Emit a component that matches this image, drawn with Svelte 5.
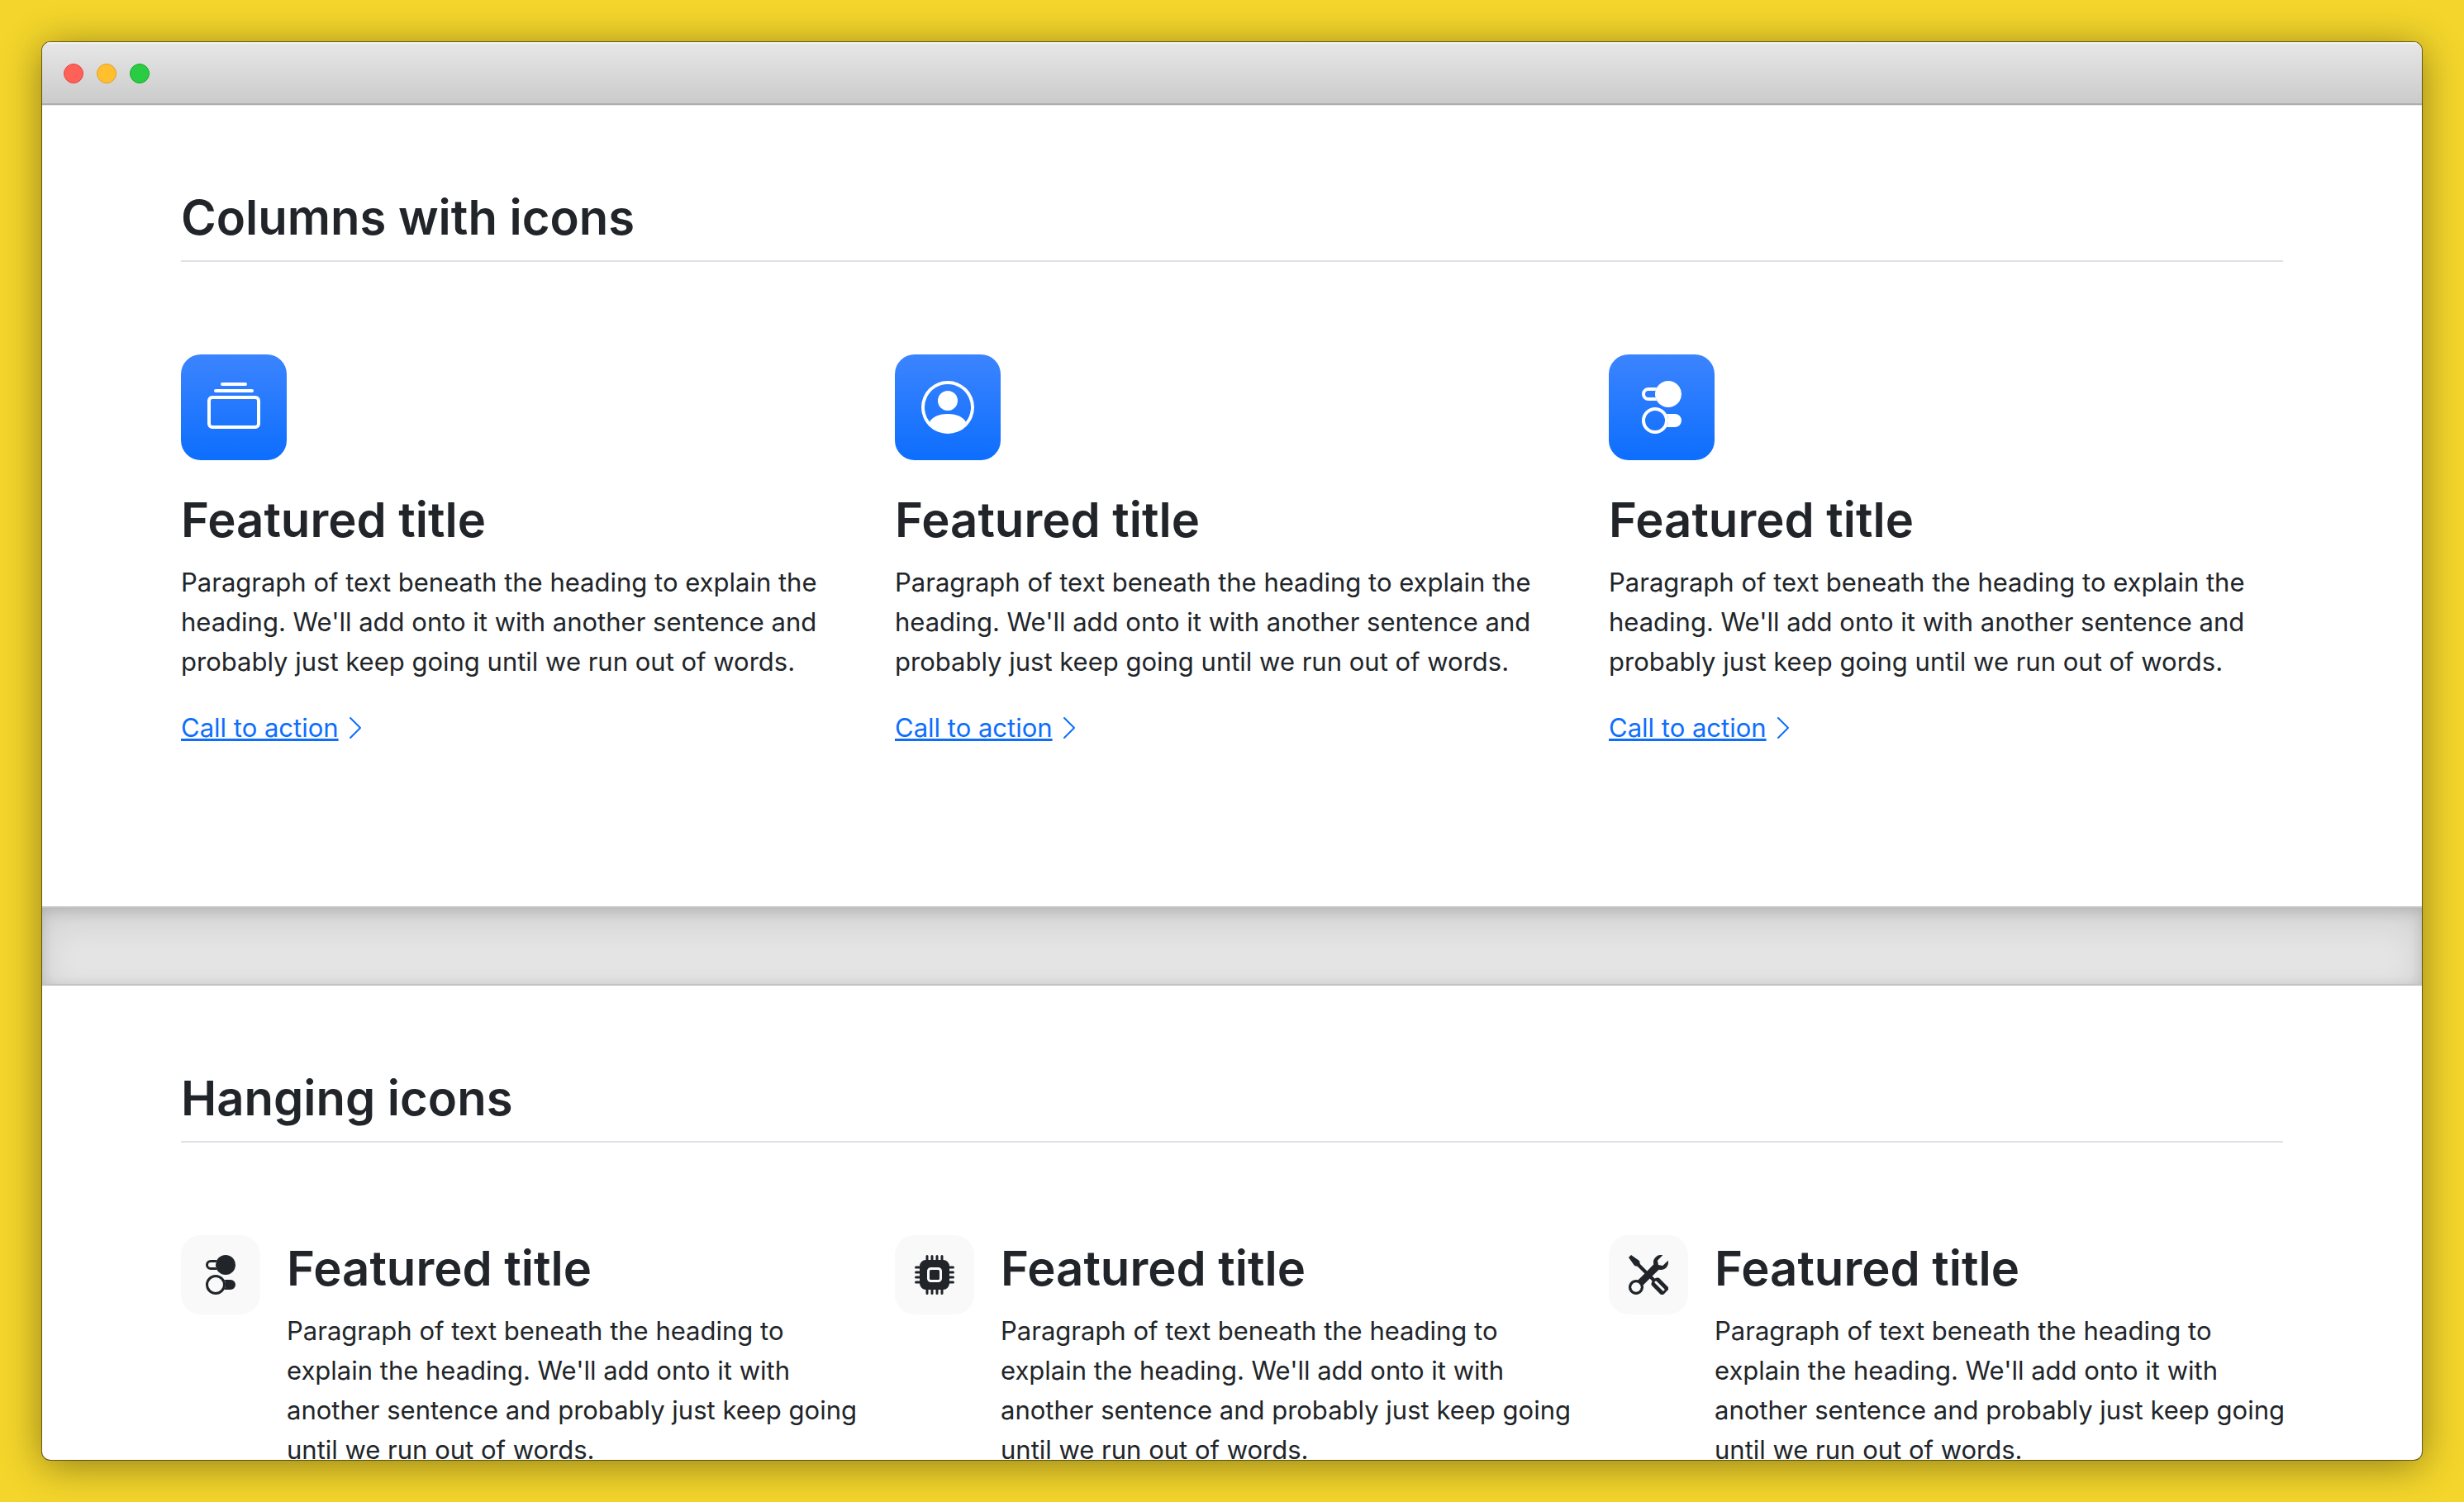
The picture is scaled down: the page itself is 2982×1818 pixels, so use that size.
<script>
  const paths = {
    collection: [
      'M2.5 3.5a.5.5 0 0 1 0-1h11a.5.5 0 0 1 0 1h-11zm2-2a.5.5 0 0 1 0-1h7a.5.5 0 0 1 0 1h-7zM0 13a1.5 1.5 0 0 0 1.5 1.5h13A1.5 1.5 0 0 0 16 13V6a1.5 1.5 0 0 0-1.5-1.5h-13A1.5 1.5 0 0 0 0 6v7zm1.5.5A.5.5 0 0 1 1 13V6a.5.5 0 0 1 .5-.5h13a.5.5 0 0 1 .5.5v7a.5.5 0 0 1-.5.5h-13z',
    ],
    person: [
      'M11 6a3 3 0 1 1-6 0 3 3 0 0 1 6 0z',
      'M0 8a8 8 0 1 1 16 0A8 8 0 0 1 0 8zm8-7a7 7 0 0 0-5.468 11.37C3.242 11.226 4.805 10 8 10s4.757 1.225 5.468 2.37A7 7 0 0 0 8 1z',
    ],
    toggles: [
      'M9.465 10H12a2 2 0 1 1 0 4H9.465c.34-.588.535-1.271.535-2 0-.729-.195-1.412-.535-2z',
      'M6 15a3 3 0 1 0 0-6 3 3 0 0 0 0 6zm0 1a4 4 0 1 1 0-8 4 4 0 0 1 0 8zm.535-10a3.975 3.975 0 0 1-.409-1H4a1 1 0 0 1 0-2h2.126c.091-.355.23-.69.41-1H4a2 2 0 1 0 0 4h2.535z',
      'M14 4a4 4 0 1 1-8 0 4 4 0 0 1 8 0z',
    ],
    cpu: [
      'M6.5 6a.5.5 0 0 0-.5.5v3a.5.5 0 0 0 .5.5h3a.5.5 0 0 0 .5-.5v-3a.5.5 0 0 0-.5-.5h-3z',
      'M5.5.5a.5.5 0 0 0-1 0V2A2.5 2.5 0 0 0 2 4.5H.5a.5.5 0 0 0 0 1H2v1H.5a.5.5 0 0 0 0 1H2v1H.5a.5.5 0 0 0 0 1H2v1H.5a.5.5 0 0 0 0 1H2A2.5 2.5 0 0 0 4.5 14v1.5a.5.5 0 0 0 1 0V14h1v1.5a.5.5 0 0 0 1 0V14h1v1.5a.5.5 0 0 0 1 0V14h1v1.5a.5.5 0 0 0 1 0V14a2.5 2.5 0 0 0 2.5-2.5h1.5a.5.5 0 0 0 0-1H14v-1h1.5a.5.5 0 0 0 0-1H14v-1h1.5a.5.5 0 0 0 0-1H14v-1h1.5a.5.5 0 0 0 0-1H14A2.5 2.5 0 0 0 11.5 2V.5a.5.5 0 0 0-1 0V2h-1V.5a.5.5 0 0 0-1 0V2h-1V.5a.5.5 0 0 0-1 0V2h-1V.5zm1 4.5h3A1.5 1.5 0 0 1 11 6.5v3A1.5 1.5 0 0 1 9.5 11h-3A1.5 1.5 0 0 1 5 9.5v-3A1.5 1.5 0 0 1 6.5 5z',
    ],
    tools: [
      'M1 0 0 1l2.2 3.081a1 1 0 0 0 .815.419h.07a1 1 0 0 1 .708.293l2.675 2.675-2.617 2.654A3.003 3.003 0 0 0 0 13a3 3 0 1 0 5.878-.851l2.654-2.617.968.968-.305.914a1 1 0 0 0 .242 1.023l3.356 3.356a1 1 0 0 0 1.414 0l1.586-1.586a1 1 0 0 0 0-1.414l-3.356-3.356a1 1 0 0 0-1.023-.242L10.5 9.5l-.96-.96 2.68-2.643A3.005 3.005 0 0 0 16 3c0-.269-.035-.53-.102-.777l-2.14 2.141L12 4l-.364-1.757L13.777.102a3 3 0 0 0-3.675 3.68L7.462 6.46 4.793 3.793a1 1 0 0 1-.293-.707v-.071a1 1 0 0 0-.419-.814L1 0zm9.646 10.646a.5.5 0 0 1 .708 0l3 3a.5.5 0 0 1-.708.708l-3-3a.5.5 0 0 1 0-.708zM3 11l.471.242.529.026.287.445.445.287.026.529L5 13l-.242.471-.026.529-.445.287-.287.445-.529.026L3 15l-.471-.242L2 14.732l-.287-.445L1.268 14l-.026-.529L1 13l.242-.471.026-.529.445-.287.287-.445.529-.026L3 11z',
    ],
    chevron: [
      'M4.646 1.646a.5.5 0 0 1 .708 0l6 6a.5.5 0 0 1 0 .708l-6 6a.5.5 0 0 1-.708-.708L10.293 8 4.646 2.354a.5.5 0 0 1 0-.708z',
    ],
  };

  const text =
    "Paragraph of text beneath the heading to explain the heading. We'll add onto it with another sentence and probably just keep going until we run out of words.";
</script>

{#snippet icon(name)}
  <svg class="icon" viewBox="0 0 16 16" fill="currentColor" aria-hidden="true">
    {#each paths[name] as d}
      <path fill-rule="evenodd" {d} />
    {/each}
  </svg>
{/snippet}

<div class="desktop">
  <div class="window">
    <header class="titlebar">
      <button class="light close" aria-label="Close"></button>
      <button class="light minimize" aria-label="Minimize"></button>
      <button class="light zoom" aria-label="Zoom"></button>
    </header>

    <main class="viewport">
      <section class="container">
        <h2 class="section-title">Columns with icons</h2>
        <div class="features">
          {#each ['collection', 'person', 'toggles'] as name}
            <article>
              <div class="tile primary">{@render icon(name)}</div>
              <h2>Featured title</h2>
              <p>{text}</p>
              <a class="action" href="#top">
                <span>Call to action</span>
                {@render icon('chevron')}
              </a>
            </article>
          {/each}
        </div>
      </section>

      <div class="divider"></div>

      <section class="container">
        <h2 class="section-title">Hanging icons</h2>
        <div class="features">
          {#each ['toggles', 'cpu', 'tools'] as name}
            <article class="hanging">
              <div class="tile light-tile">{@render icon(name)}</div>
              <div class="body">
                <h2>Featured title</h2>
                <p>{text}</p>
              </div>
            </article>
          {/each}
        </div>
      </section>
    </main>
  </div>
</div>

<style>
  :global(body) {
    background: #f3d52b;
  }

  .desktop {
    box-sizing: border-box;
    height: 100vh;
    padding: 51px;
    overflow: hidden;
    background: #f3d52b;
    color: #212529;
    font-family: Inter, 'Liberation Sans', sans-serif;
    font-size: 31px;
    line-height: 48px;
  }

  .window {
    display: flex;
    flex-direction: column;
    height: 100%;
    overflow: hidden;
    border-radius: 10px;
    background: #fff;
    box-shadow:
      0 0 0 1px rgba(0, 0, 0, 0.5),
      0 6px 48px rgba(0, 0, 0, 0.42);
  }

  .titlebar {
    display: flex;
    flex: none;
    align-items: center;
    gap: 16px;
    box-sizing: border-box;
    height: 76px;
    padding: 2px 26px 0;
    border-bottom: 2px solid #aeaeae;
    background: linear-gradient(#e7e7e7, #cbcbcb);
    box-shadow:
      inset 0 2px #f3f3f3,
      0 1px #e8e8e8;
  }

  .light {
    width: 24px;
    height: 24px;
    padding: 0;
    border: 1px solid;
    border-radius: 50%;
  }

  .close {
    border-color: #e2483f;
    background: #ff6159;
  }

  .minimize {
    border-color: #dfa023;
    background: #ffbf2f;
  }

  .zoom {
    border-color: #1aab29;
    background: #29cc42;
  }

  .viewport {
    flex: 1;
    min-height: 0;
    overflow: hidden;
  }

  .container {
    box-sizing: border-box;
    max-width: 2640px;
    margin: 0 auto;
    padding: 96px 48px;
  }

  h2 {
    margin: 0 0 12px;
    font-size: 58px;
    font-weight: 600;
    line-height: 80px;
  }

  p {
    margin: 0 0 32px;
  }

  .section-title {
    margin-bottom: 16px;
    padding-bottom: 12px;
    border-bottom: 2px solid #dee2e6;
  }

  .features {
    display: grid;
    grid-template-columns: repeat(3, minmax(0, 1fr));
    gap: 48px;
    padding: 96px 0;
  }

  .tile {
    display: flex;
    flex: none;
    align-items: center;
    justify-content: center;
    border-radius: 24px;
  }

  .icon {
    display: block;
    flex: none;
    width: 1em;
    height: 1em;
  }

  .primary {
    width: 128px;
    height: 128px;
    margin-bottom: 32px;
    background: linear-gradient(#3c84ff, #0d6efd);
    color: #fff;
    font-size: 64px;
  }

  .light-tile {
    width: 96px;
    height: 96px;
    background: #f9f9f9;
    font-size: 48px;
  }

  .action {
    display: inline-flex;
    align-items: center;
    gap: 4px;
    color: #0d6efd;
    text-decoration: none;
    vertical-align: top;
  }

  .action span {
    text-decoration: underline;
  }

  .action .icon {
    width: 32px;
    height: 32px;
  }

  .hanging {
    display: flex;
    align-items: flex-start;
    gap: 32px;
    margin-right: -16px;
  }

  .body {
    min-width: 0;
  }

  .divider {
    box-sizing: border-box;
    height: 96px;
    border: solid rgba(0, 0, 0, 0.15);
    border-width: 2px 0;
    background: rgba(0, 0, 0, 0.1);
    box-shadow:
      inset 0 16px 48px rgba(0, 0, 0, 0.1),
      inset 0 4px 16px rgba(0, 0, 0, 0.15);
  }

  @media (max-width: 1500px) {
    .features {
      grid-template-columns: minmax(0, 1fr);
    }
  }
</style>
